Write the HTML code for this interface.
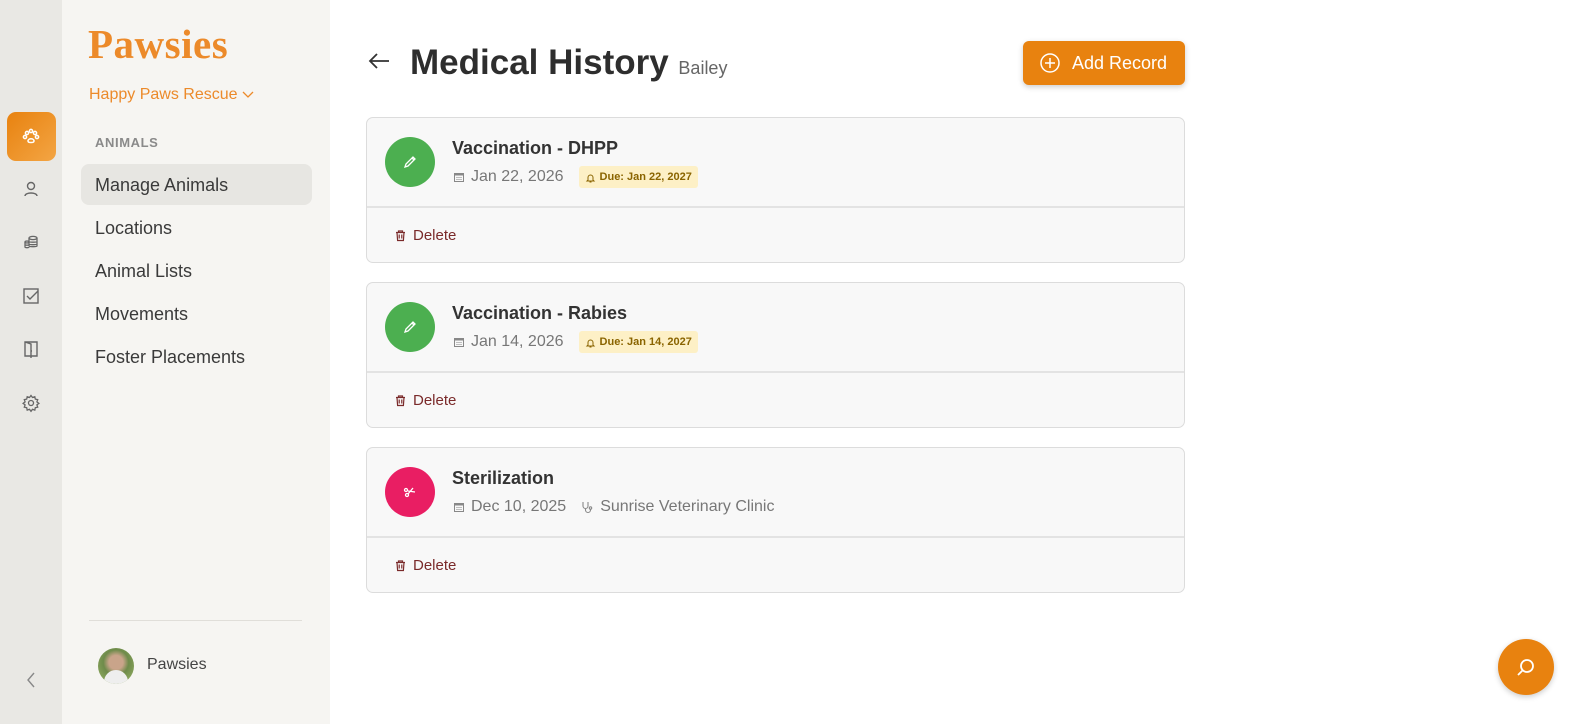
<!DOCTYPE html>
<html><head><meta charset="utf-8"><style>
*{box-sizing:border-box;margin:0;padding:0}
body{width:1579px;height:724px;overflow:hidden;font-family:"Liberation Sans",sans-serif;background:#fff;position:relative;color:#333}
.rail{position:absolute;left:0;top:0;width:62px;height:724px;background:#e9e8e4}
.side{position:absolute;left:62px;top:0;width:268px;height:724px;background:#f6f5f2}
.ri{position:absolute;left:21px;width:20px;height:20px}
.abs{position:absolute}
.nav{position:absolute;left:95px;font-size:18px;color:#3a3a3a}
.card{position:absolute;left:366px;width:819px;height:146px;border:1px solid #dcdcdc;border-radius:7px;background:#f8f8f8}
.card .top{height:90px;border-bottom:2px solid #e3e3e3;position:relative}
.circ{position:absolute;left:18px;top:19px;width:50px;height:50px;border-radius:50%}
.ttl{position:absolute;left:85px;top:20px;font-size:18px;font-weight:bold;color:#333}
.meta{position:absolute;left:86px;top:48px;height:22px;font-size:16px;color:#777;display:flex;align-items:center;white-space:nowrap}
.meta svg{margin-right:6px}
.due{background:#fdf0c6;color:#8a6400;font-size:11px;font-weight:bold;padding:0 6px;height:22px;border-radius:3px;margin-left:15px;display:flex;align-items:center}
.due svg{margin-right:4px}
.del{position:absolute;left:27px;top:109px;font-size:15px;color:#7a2a2a;display:flex;align-items:center}
.del svg{margin-right:6px}
</style></head><body>
<div class="rail">
 <div class="abs" style="left:7px;top:112px;width:49px;height:49px;border-radius:9px;background:linear-gradient(135deg,#e8820f,#f3a544)"></div>
 <svg class="ri" style="top:126px" viewBox="0 0 20 20" fill="none" stroke="#fff" stroke-width="1.5"><circle cx="6" cy="7" r="1.6"/><circle cx="10" cy="5" r="1.6"/><circle cx="14" cy="7" r="1.6"/><circle cx="4" cy="11" r="1.6"/><circle cx="16" cy="11" r="1.6"/><path d="M7 15c0-3 6-3 6 0c0 2-6 2-6 0z"/></svg>
 <svg class="ri" style="top:179px" viewBox="0 0 20 20" fill="none" stroke="#666" stroke-width="1.4"><circle cx="10" cy="7" r="3.5"/><path d="M4 17c0-4 12-4 12 0"/></svg>
 <svg class="ri" style="top:232px" viewBox="0 0 20 20" fill="none" stroke="#666" stroke-width="1.3"><ellipse cx="12" cy="6" rx="4" ry="1.6"/><path d="M8 6v8c0 1 8 1 8 0V6M8 9.5c0 1 8 1 8 0M8 12c0 1 8 1 8 0"/><path d="M4 10v5c0 1 4 1 4 0M4 12.5c0 1 4 1 4 0"/><ellipse cx="6" cy="10" rx="2" ry="1"/></svg>
 <svg class="ri" style="top:286px" viewBox="0 0 20 20" fill="none" stroke="#666" stroke-width="1.4"><rect x="3" y="3" width="14" height="14"/><path d="M6 10l3 3 8-8"/></svg>
 <svg class="ri" style="top:339px" viewBox="0 0 20 20" fill="none" stroke="#666" stroke-width="1.4"><path d="M4 3h12v14H4zM4 3l6 2v14M10 12h1"/></svg>
 <svg class="ri" style="top:393px" viewBox="0 0 20 20" fill="none" stroke="#666" stroke-width="1.3"><circle cx="10" cy="10" r="2.5"/><path d="M10 2.5l1.5 2 2.3-.8.5 2.4 2.4.5-.8 2.3 2 1.5-2 1.5.8 2.3-2.4.5-.5 2.4-2.3-.8-1.5 2-1.5-2-2.3.8-.5-2.4-2.4-.5.8-2.3-2-1.5 2-1.5-.8-2.3 2.4-.5.5-2.4 2.3.8z"/></svg>
 <svg class="abs" style="left:24px;top:671px" width="14" height="18" viewBox="0 0 14 18" fill="none" stroke="#888" stroke-width="1.4"><path d="M10 2L4 9l6 7"/></svg>
</div>
<div class="side">
 <div class="abs" style="left:26px;top:20px;font-family:'Liberation Serif',serif;font-weight:bold;font-size:41px;color:#ec8a2a;letter-spacing:0.5px">Pawsies</div>
 <div class="abs" style="left:27px;top:86px;font-size:16px;color:#ec8a2a">Happy Paws Rescue <svg width="12" height="8" viewBox="0 0 12 8" fill="none" stroke="#ec8a2a" stroke-width="1.3"><path d="M1 1l5 5 5-5"/></svg></div>
 <div class="abs" style="left:33px;top:135px;font-size:13px;font-weight:bold;color:#8a8a8a;letter-spacing:0.6px">ANIMALS</div>
 <div class="abs" style="left:19px;top:164px;width:231px;height:41px;border-radius:8px;background:#e7e6e2"></div>
 <div class="abs" style="left:27px;top:620px;width:213px;height:1px;background:#e0ded9"></div>
 <div class="abs" style="left:36px;top:648px;width:36px;height:36px;border-radius:50%;overflow:hidden;background:radial-gradient(circle at 50% 40%,#c9a48a 0 25%,#6e8b4a 45%,#9db86a 100%)"><div style="position:absolute;left:6px;top:22px;width:24px;height:14px;border-radius:12px 12px 0 0;background:#eee"></div></div>
 <div class="abs" style="left:85px;top:656px;font-size:16px;color:#444">Pawsies</div>
</div>
<div class="nav" style="top:175px">Manage Animals</div>
<div class="nav" style="top:218px">Locations</div>
<div class="nav" style="top:261px">Animal Lists</div>
<div class="nav" style="top:304px">Movements</div>
<div class="nav" style="top:347px">Foster Placements</div>

<svg class="abs" style="left:367px;top:51px" width="24" height="20" viewBox="0 0 24 20" fill="none" stroke="#333" stroke-width="1.8"><path d="M22 10H3M10 3L3 10l7 7"/></svg>
<div class="abs" style="left:410px;top:43px;font-size:35px;font-weight:bold;color:#2e2e2e">Medical History <span style="font-size:18px;font-weight:normal;color:#666">Bailey</span></div>
<div class="abs" style="left:1023px;top:41px;width:162px;height:44px;border-radius:6px;background:#e8820f;box-shadow:0 2px 6px rgba(0,0,0,.2);color:#fff;font-size:18px;display:flex;align-items:center;padding-left:16px">
 <svg width="22" height="22" viewBox="0 0 22 22" fill="none" stroke="#fff" stroke-width="1.5"><circle cx="11" cy="11" r="9"/><path d="M11 6v10M6 11h10"/></svg><span style="margin-left:11px">Add Record</span></div>

<svg width="0" height="0" style="position:absolute">
 <defs>
  <g id="cal"><rect x="1.5" y="2.5" width="9" height="8" fill="none" stroke="#888" stroke-width="1"/><rect x="1.5" y="2.5" width="9" height="2" fill="#888"/><path d="M3 6.5h6M3 8.5h6" stroke="#aaa" stroke-width=".8"/></g>
  <g id="bell" fill="none" stroke="#8a6400" stroke-width="1"><path d="M3 8V5.5a2.5 2.5 0 015 0V8l1 1H2z"/><path d="M4.5 10h2"/></g>
  <g id="trash" fill="none" stroke="#7a2a2a" stroke-width="1.2"><path d="M2 3.5h9M4.5 3.5V2h4v1.5M3 3.5l.6 8h5.8l.6-8M5.2 5.5v4M7.8 5.5v4"/></g>
 </defs>
</svg>

<div class="card" style="top:117px"><div class="top">
 <div class="circ" style="background:#4caf50"><svg style="position:absolute;left:17px;top:17px" width="16" height="16" viewBox="0 0 16 16" fill="none" stroke="#fff" stroke-width="1.3"><path d="M3 13l1-3 6-6 2 2-6 6zM10 4l1-1 2 2-1 1"/></svg></div>
 <div class="ttl">Vaccination - DHPP</div>
 <div class="meta"><svg width="12" height="12"><use href="#cal"/></svg>Jan 22, 2026<span class="due"><svg width="11" height="11"><use href="#bell"/></svg>Due: Jan 22, 2027</span></div>
 </div><div class="del"><svg width="13" height="13"><use href="#trash"/></svg>Delete</div></div>

<div class="card" style="top:282px"><div class="top">
 <div class="circ" style="background:#4caf50"><svg style="position:absolute;left:17px;top:17px" width="16" height="16" viewBox="0 0 16 16" fill="none" stroke="#fff" stroke-width="1.3"><path d="M3 13l1-3 6-6 2 2-6 6zM10 4l1-1 2 2-1 1"/></svg></div>
 <div class="ttl">Vaccination - Rabies</div>
 <div class="meta"><svg width="12" height="12"><use href="#cal"/></svg>Jan 14, 2026<span class="due"><svg width="11" height="11"><use href="#bell"/></svg>Due: Jan 14, 2027</span></div>
 </div><div class="del"><svg width="13" height="13"><use href="#trash"/></svg>Delete</div></div>

<div class="card" style="top:447px"><div class="top">
 <div class="circ" style="background:#e91e63"><svg style="position:absolute;left:17px;top:17px" width="16" height="16" viewBox="0 0 16 16" fill="none" stroke="#fff" stroke-width="1.3"><circle cx="4" cy="6" r="1.5"/><circle cx="5" cy="11" r="1.5"/><path d="M6 7l7 1M6 10l5-6"/></svg></div>
 <div class="ttl">Sterilization</div>
 <div class="meta"><svg width="12" height="12"><use href="#cal"/></svg>Dec 10, 2025<svg style="margin-left:15px" width="13" height="13" viewBox="0 0 13 13" fill="none" stroke="#888" stroke-width="1.1"><path d="M2 1v4a2.5 2.5 0 005 0V1M4.5 7.5v1.5a2.5 2.5 0 005 0V8"/><circle cx="9.5" cy="7" r="1.2"/></svg>Sunrise Veterinary Clinic</div>
 </div><div class="del"><svg width="13" height="13"><use href="#trash"/></svg>Delete</div></div>

<div class="abs" style="left:1498px;top:639px;width:56px;height:56px;border-radius:50%;background:#e8820f;box-shadow:0 2px 6px rgba(0,0,0,.2)"><svg style="position:absolute;left:17px;top:17px" width="22" height="22" viewBox="0 0 22 22" fill="none" stroke="#fff" stroke-width="1.8"><circle cx="12" cy="10" r="6"/><path d="M8 14l-5 5"/></svg></div>
</body></html>
